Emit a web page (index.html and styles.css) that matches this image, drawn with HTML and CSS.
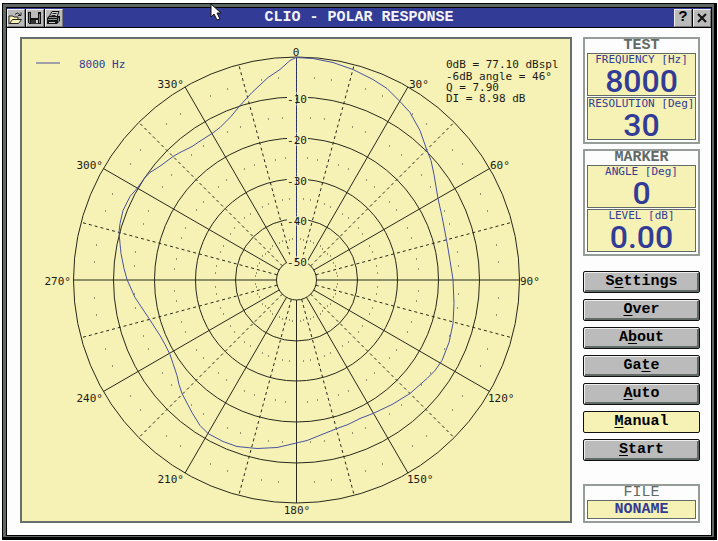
FILE: index.html
```html
<!DOCTYPE html>
<html lang="en">
<head>
<meta charset="utf-8">
<title>CLIO - POLAR RESPONSE</title>
<link rel="stylesheet" href="styles.css">
</head>
<body>
<div class="window">
  <div class="frame">
    <header class="titlebar">
      <div class="tools">
        <button class="tool" aria-label="Open"><svg viewBox="0 0 16 16"><path d="M1 6h4l1 1h4v3H5l-3 4H1z" fill="#f6f1b4"/><path d="M1 14V6h4l1 1h4v2" fill="none" stroke="#222"/><path d="M1.500 13.500l3-4h9l-3 4z" fill="#f6f1b4" stroke="#222"/><path d="M7 4.500q2-3 5 0M13 2.500v3h-3" fill="none" stroke="#222"/></svg></button>
        <button class="tool" aria-label="Save"><svg viewBox="0 0 16 16" shape-rendering="crispEdges"><path d="M1 2h13v12H2l-1-1z" fill="#111"/><path d="M2 3h1v10H2zM12 4h1v9h-1z" fill="#727a76"/><path d="M4 2h7v6H4z" fill="#bbb"/><path d="M4 10h7v4H4z" fill="#333"/><path d="M9 10h2v3H9z" fill="#ccc"/></svg></button>
        <button class="tool" aria-label="Print"><svg viewBox="0 0 16 16"><path d="M6 1.500h7L11 7H3z" fill="#ccc" stroke="#111"/><path d="M6.500 3.500h4M5.500 5.500h4" stroke="#222"/><path d="M1 8l2-2h11v5l-3 3H1z" fill="#151515"/><path d="M3 7.500h8M2 9.500h9" stroke="#8b928e"/><path d="M3 12.500h6" stroke="#ccc"/><path d="M12.500 8v4" stroke="#79817d"/></svg></button>
      </div>
      <h1>CLIO - POLAR RESPONSE</h1>
      <div class="tools end">
        <button class="tool glyph" aria-label="Help">?</button>
        <button class="tool" aria-label="Close"><svg viewBox="0 0 16 16"><path d="M4 4l8 8M12 4l-8 8" stroke="#111" stroke-width="2"/></svg></button>
      </div>
    </header>
    <div class="body">
      <main class="chart">
        <svg class="plot" viewBox="22 39 548 481" role="img" aria-label="Polar response at 8000 Hz">
          <g id="grid" class="grid"></g>
          <path class="mask" d="M287 91h21v14h-21zM287 132h21v14h-21zM287 173h21v14h-21zM287 213h21v14h-21zM287 254h21v14h-21z"/>
          <path class="axis" d="M296.500 57V260"/>
          <path class="curve" d="M296 57L290 60L280 69L268 77L252 92L240 105L231 116L220 127L212 133L201 140L192 146L180 152L173 156L161 165L150 172L145 177L137 188L130 196L123 210L120 223L119 232L120 243L121 253L124 268L127 279L135 297L149 318L160 335L165 344L170 354L173 363L177 375L179 384L182 393L192 412L200 425L208 433L223 441L237 446L257 448L277 447L290 444L307 440L337 428L348 424L360 418L373 413L392 404L410 393L427 378L435 370L442 360L449 342L453 323L454 303L453 279L450 260L447 242L442 216L438 198L434 174L431 160L427 150L420 130L410 112L400 101L387 88L373 79L353 69L333 62L313 58L296 57"/>
          <path class="curve" d="M36 62.500H60"/>
          <g class="label">
            <text class="blue" x="79" y="67">8000 Hz</text>
            <text x="446" y="67">0dB = 77.10 dBspl</text>
            <text x="446" y="79">-6dB angle = 46°</text>
            <text x="446" y="90">Q = 7.90</text>
            <text x="446" y="101">DI = 8.98 dB</text>
            <g text-anchor="middle">
              <text x="296" y="55">0</text>
              <text x="297" y="102">-10</text>
              <text x="297" y="143">-20</text>
              <text x="297" y="184">-30</text>
              <text x="297" y="224">-40</text>
              <text x="297" y="265">-50</text>
              <text x="297" y="513">180°</text>
            </g>
            <text x="409" y="87">30°</text>
            <text x="490" y="168">60°</text>
            <text x="520" y="284">90°</text>
            <text x="488" y="401">120°</text>
            <text x="407" y="482">150°</text>
            <g text-anchor="end">
              <text x="184" y="87">330°</text>
              <text x="103" y="168">300°</text>
              <text x="71" y="284">270°</text>
              <text x="103" y="401">240°</text>
              <text x="184" y="482">210°</text>
            </g>
          </g>
        </svg>
      </main>
      <aside class="side">
        <section class="group">
          <h2>TEST</h2>
          <div class="readout"><span>FREQUENCY [Hz]</span><output>8000</output></div>
          <div class="readout"><span>RESOLUTION [Deg]</span><output>30</output></div>
        </section>
        <section class="group">
          <h2>MARKER</h2>
          <div class="readout"><span>ANGLE [Deg]</span><output>0</output></div>
          <div class="readout"><span>LEVEL [dB]</span><output>0.00</output></div>
        </section>
        <nav class="menu">
          <button>S<u>e</u>ttings</button>
          <button><u>O</u>ver</button>
          <button>A<u>b</u>out</button>
          <button>Ga<u>t</u>e</button>
          <button><u>A</u>uto</button>
          <button class="active"><u>M</u>anual</button>
          <button><u>S</u>tart</button>
        </nav>
        <section class="group file">
          <h2>FILE</h2>
          <div class="name">NONAME</div>
        </section>
      </aside>
    </div>
  </div>
</div>
<svg class="pointer" viewBox="0 0 12 18" aria-hidden="true"><path d="M1 1v13l3-3 3 6 3-1-3-6h4z" fill="#fff" stroke="#111"/></svg>
<script src="script.js"></script>
</body>
</html>
```
FILE: styles.css
```css
* { box-sizing: border-box; }
body {
  margin: 0;
  padding: 3px 1px 1px 2px;
  min-height: 100vh;
  display: flex;
  background: #fff;
  font-family: "Liberation Mono", monospace;
}
button { font: inherit; padding: 0; color: #000; }
.window { flex: 1; display: flex; background: #5f6763; border: 1px solid #000; border-right-width: 3px; border-bottom-width: 3px; padding: 3px 2px 1px 3px; }
.frame { flex: 1; display: flex; flex-direction: column; border: 1px solid #000; background: #fdfdfd; }
.titlebar { display: grid; grid-template-columns: 1fr auto 1fr; align-items: center; height: 20px; background: #323c96; border-bottom: 1px solid #000; }
.titlebar h1 { margin: 0; font-size: 15px; line-height: 18px; color: #f4f4f8; }
.tools { display: flex; gap: 1px; justify-self: start; background: #000; }
.end { justify-self: end; }
.tool { width: 18px; height: 18px; border: 1px solid; border-color: #eee #777 #777 #eee; background: #bbb; display: flex; align-items: center; justify-content: center; }
.tool svg { width: 16px; height: 16px; flex: none; }
.glyph { font-weight: bold; font-size: 15px; line-height: 16px; }
.body { flex: 1; display: flex; gap: 11px; padding: 9px 11px 12px 13px; }
.chart { flex: 1; display: flex; background: #f6f1b4; border: 2px solid #697069; }
.plot { width: 100%; height: auto; display: block; }
.grid path, .grid circle { fill: none; stroke: #29281c; stroke-width: 1; }
.grid .dashed { stroke-dasharray: 3 3; }
.grid .dot { fill: #3b3925; stroke: none; }
.mask { fill: #f6f1b4; }
.axis { stroke: #323c78; stroke-dasharray: 3 1; }
.curve { fill: none; stroke: #4853a0; stroke-width: 1; }
.label { font-family: "DejaVu Sans Mono", monospace; font-size: 11px; fill: #1c1c16; }
.label .blue { fill: #323c96; }
.side { width: 117px; display: flex; flex-direction: column; }
.group { border: 2px solid #969c98; padding: 0 2px 2px; margin-bottom: 5px; display: flex; flex-direction: column; gap: 1px; }
.group h2 { margin: 0; height: 13px; font-size: 15px; line-height: 14px; text-align: center; color: #626a66; }
.readout, .name { border: 1px solid #626a66; background: #f6f1b4; color: #323c96; text-align: center; }
.readout { height: 43px; display: flex; flex-direction: column; align-items: center; }
.readout span { font-family: "DejaVu Sans Mono", monospace; font-size: 11px; line-height: 11px; white-space: nowrap; }
.readout output { font: 500 32px/32px Roboto, sans-serif; }
.menu { display: flex; flex-direction: column; gap: 6px; margin-top: 10px; }
.menu button { height: 22px; font-weight: bold; font-size: 15px; line-height: 16px; background: #bbb; border: 1px solid #111; border-radius: 2px; box-shadow: inset 1px 1px #eee, inset -2px -2px #626a66; }
.menu .active { background: #f6f1b4; box-shadow: none; }
.menu u { text-underline-offset: 2px; text-decoration-thickness: 1px; }
.file { margin: auto 0 0; }
.file h2 { font-weight: normal; }
.name { height: 19px; font-weight: bold; font-size: 15px; line-height: 17px; }
.pointer { position: absolute; left: 210px; top: 3px; width: 12px; height: 18px; }
```
FILE: script.js
```js
const SVG = "http://www.w3.org/2000/svg";
const grid = document.getElementById("grid");
const cx = 296.5, cy = 279.5;

function add(name, attrs) {
  const node = document.createElementNS(SVG, name);
  for (const key in attrs) node.setAttribute(key, attrs[key]);
  grid.appendChild(node);
}

function point(radius, degrees) {
  const a = degrees * Math.PI / 180;
  return [cx + radius * Math.sin(a), cy - radius * Math.cos(a)];
}

[20, 61, 101, 142, 183, 223].forEach(r => add("circle", { cx, cy, r }));

for (let deg = 0; deg < 360; deg += 15) {
  const [x1, y1] = point(20, deg);
  const [x2, y2] = point(223, deg);
  add("path", { d: `M${x1} ${y1}L${x2} ${y2}`, class: deg % 30 ? "dashed" : "solid" });
}

[41, 81, 122, 163, 203].forEach(r => {
  for (let deg = 5; deg < 360; deg += 5) {
    if (deg % 15 === 0) continue;
    const [x, y] = point(r, deg);
    add("rect", { x: Math.floor(x), y: Math.floor(y), width: 1, height: 1, class: "dot" });
  }
});
```
